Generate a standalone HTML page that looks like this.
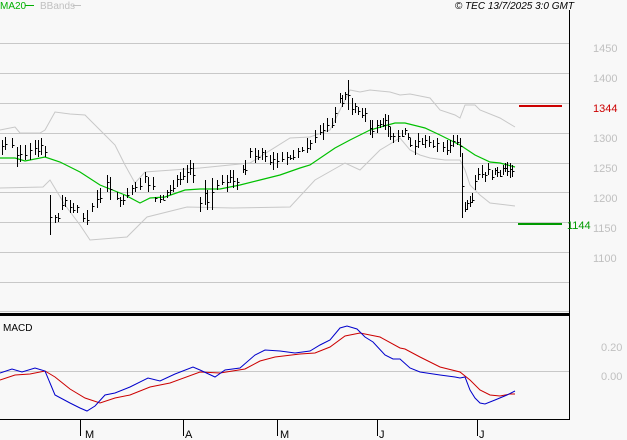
<!DOCTYPE html>
<html><head><meta charset="utf-8"><style>
html,body{margin:0;padding:0;background:#f8f8f8;}
body{width:627px;height:440px;overflow:hidden;position:relative;font-family:"Liberation Sans",sans-serif;}
svg{position:absolute;left:0;top:0;}
</style></head><body>
<svg id="s" width="627" height="440" xmlns="http://www.w3.org/2000/svg" font-family="Liberation Sans, sans-serif">
<rect width="627" height="440" fill="#f8f8f8"/>
<g stroke="#c8c8c8" stroke-width="1">
<line x1="0" y1="43.5" x2="569" y2="43.5"/><line x1="0" y1="73.5" x2="569" y2="73.5"/>
<line x1="0" y1="103.5" x2="569" y2="103.5"/><line x1="0" y1="133.5" x2="569" y2="133.5"/>
<line x1="0" y1="163.5" x2="569" y2="163.5"/><line x1="0" y1="192.5" x2="569" y2="192.5"/>
<line x1="0" y1="222.5" x2="569" y2="222.5"/><line x1="0" y1="252.5" x2="569" y2="252.5"/>
<line x1="0" y1="282.5" x2="569" y2="282.5"/><line x1="0" y1="311.5" x2="569" y2="311.5"/>
<line x1="0" y1="371.5" x2="569" y2="371.5"/>
</g>
<g fill="none" stroke="#c8c8c8" stroke-width="1">
<polyline points="0,130 15,127 20,133 40,133 45,130 55,112 70,114 85,115 100,130 115,145 125,165 135,183 145,172 200,168 250,163 290,138 310,137 330,130 350,90 360,92 370,90 390,92 400,95 410,94 430,98 440,110 455,115 460,118 465,105 475,105 480,110 500,118 515,127"/>
<polyline points="0,188 43,187 50,180 65,205 80,225 90,240 127,237 147,217 187,207 233,208 290,207 315,180 345,163 360,170 380,150 400,138 410,150 420,155 430,158 445,160 460,160 465,170 470,185 480,195 490,203 515,206"/>
</g>
<polyline fill="none" stroke="#00c000" stroke-width="1.2" points="0,158 15,158 25,161 45,157 60,162 80,172 100,185 125,195 140,203 150,198 165,197 185,190 200,189 220,189 240,185 260,180 280,175 300,168 310,165 335,148 350,140 370,130 395,123 405,123 425,128 440,135 460,145 475,155 490,162 500,163 515,167"/>
<g id="bars" stroke="#000" stroke-width="1"></g>
<rect x="519" y="105" width="43" height="2" fill="#cc0000"/>
<rect x="518" y="223" width="44" height="2" fill="#009900"/>
<rect x="0" y="313" width="569" height="3" fill="#000"/>
<line x1="0" y1="419.5" x2="569" y2="419.5" stroke="#000"/>
<line x1="569.5" y1="10" x2="569.5" y2="420" stroke="#000"/>
<g stroke="#000"><line x1="80.5" y1="419" x2="80.5" y2="436"/><line x1="183.5" y1="419" x2="183.5" y2="436"/><line x1="277.5" y1="419" x2="277.5" y2="436"/><line x1="377.5" y1="419" x2="377.5" y2="436"/><line x1="477.5" y1="419" x2="477.5" y2="436"/></g>
<g font-size="11" fill="#000"><text x="85" y="438">M</text><text x="185" y="438">A</text><text x="280" y="438">M</text><text x="379" y="438">J</text><text x="479" y="438">J</text></g>
<polyline fill="none" stroke="#cc0000" stroke-width="1" points="0,380 15,375 30,374 45,371 55,377 70,389 85,398 100,403 115,398 130,395 150,387 170,383 200,372 220,373 245,369 260,361 275,357 300,354 315,353 330,347 345,336 360,333 380,337 400,348 405,349 420,357 440,367 460,372 470,380 480,390 490,395 500,396 510,394 515,394"/>
<polyline fill="none" stroke="#0000cc" stroke-width="1" points="0,373 12,369 22,372 35,368 45,371 50,383 55,395 70,403 80,408 87,411 95,406 105,395 115,393 130,387 148,378 160,381 175,374 193,367 200,370 215,377 225,370 240,368 255,355 265,350 280,351 295,353 310,351 320,345 330,340 340,328 347,326 357,329 365,337 373,342 385,355 393,359 400,359 410,368 420,372 440,375 455,377 460,378 465,377 470,390 475,398 480,403 485,404 495,400 507,395 515,391"/>
<g font-size="10" fill="#000"><text x="3" y="331">MACD</text></g>
<text x="0" y="9" font-size="10" fill="#00b000">MA20</text>
<line x1="25" y1="5.5" x2="34" y2="5.5" stroke="#00b000"/>
<text x="40" y="9" font-size="10" fill="#c0c0c0">BBands</text>
<line x1="73" y1="5.5" x2="81" y2="5.5" stroke="#c0c0c0"/>
<text x="574" y="9" font-size="10" font-style="italic" fill="#000" text-anchor="end">© TEC 13/7/2025 3:0 GMT</text>
<g font-size="11" fill="#c0c0c0">
<text x="593" y="52">1450</text><text x="593" y="82">1400</text><text x="593" y="142">1300</text>
<text x="593" y="172">1250</text><text x="593" y="202">1200</text><text x="593" y="232">1150</text><text x="593" y="262">1100</text>
<text x="601" y="351">0.20</text><text x="601" y="380">0.00</text>
</g>
<text x="593" y="112" font-size="11" fill="#cc0000">1344</text>
<text x="567" y="229" font-size="11" fill="#009900">1144</text>
</svg>
<script>
var d=[[2,140,155],[5,137,150],[12,138,148],[17,147,167],[20,145,162],[25,145,160],[30,143,160],[35,140,155],[38,140,157],[41,138,155],[45,146,157],[50,195,235],[55,215,223],[58,213,222],[62,195,210],[65,197,207],[70,200,213],[73,203,213],[77,205,213],[83,213,222],[87,210,225],[92,203,212],[97,190,208],[100,188,203],[107,175,192],[110,177,200],[117,192,200],[120,197,207],[123,195,205],[127,188,198],[132,185,195],[135,182,192],[140,178,190],[145,172,183],[148,177,192],[153,177,190],[155,197,202],[160,195,203],[163,195,200],[167,190,198],[170,185,195],[173,180,192],[177,175,187],[180,172,185],[183,168,180],[187,165,183],[190,160,175],[193,163,183],[200,197,212],[205,180,205],[207,190,210],[212,178,210],[217,180,190],[222,175,185],[227,175,192],[230,170,183],[233,170,188],[237,178,190],[243,165,173],[245,160,175],[250,148,158],[255,148,163],[258,150,160],[262,148,160],[265,150,162],[270,155,165],[273,152,170],[277,153,168],[282,152,162],[287,152,165],[290,155,160],[293,150,160],[298,148,158],[302,147,152],[307,138,153],[310,140,150],[315,130,143],[320,125,135],[323,123,140],[327,118,132],[332,118,128],[335,107,123],[340,93,103],[342,95,107],[345,92,100],[348,80,110],[352,98,115],[355,103,113],[358,107,115],[362,108,118],[365,108,122],[370,120,135],[372,120,138],[377,120,133],[380,120,128],[383,118,127],[385,114,130],[388,115,137],[390,127,140],[393,133,143],[398,130,142],[402,130,137],[405,128,135],[408,133,140],[410,138,147],[415,140,155],[418,133,148],[422,138,145],[425,135,148],[429,136,147],[433,140,148],[437,138,152],[443,142,152],[447,140,155],[450,140,153],[453,135,147],[457,135,145],[460,138,157],[462,153,218],[465,202,212],[467,200,210],[470,196,207],[472,193,203],[475,175,190],[478,168,180],[482,165,178],[485,172,182],[488,163,175],[492,170,180],[495,168,175],[497,167,177],[500,170,177],[503,165,175],[505,163,172],[507,162,176],[510,163,178],[512,165,177]];
var g=document.getElementById('bars'),h='';
d.forEach(function(b,i){var x=b[0]+.5,m=Math.round((b[1]+b[2])/2+((i%3)-1)*2)+.5;
h+='<line x1="'+x+'" y1="'+b[1]+'" x2="'+x+'" y2="'+b[2]+'"/><line x1="'+x+'" y1="'+m+'" x2="'+(x+2)+'" y2="'+m+'"/>';});
g.innerHTML=h;
</script>
</body></html>
